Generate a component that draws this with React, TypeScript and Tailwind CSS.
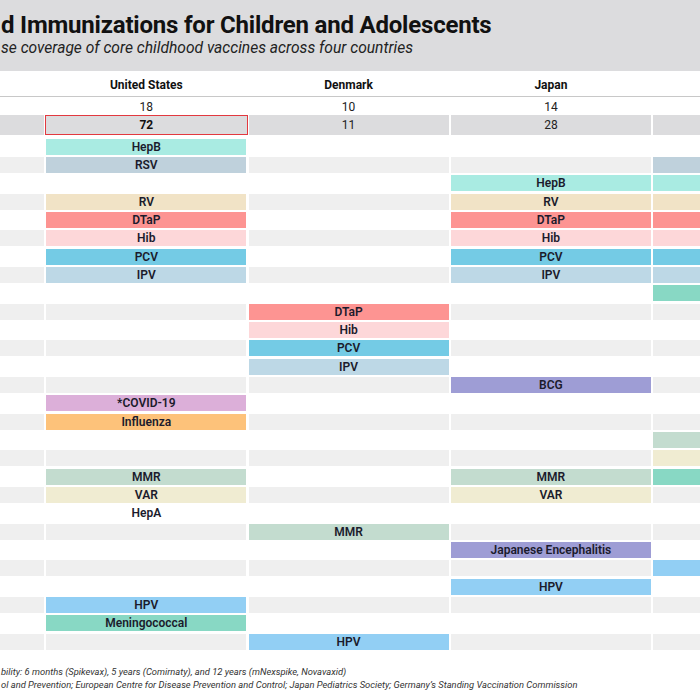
const COLORS: Record<string, string> = {
  HepB: 'bg-[#a9ebe2]',
  RSV: 'bg-[#bfd1dc]',
  RV: 'bg-[#f1e3c6]',
  DTaP: 'bg-[#fd9492]',
  Hib: 'bg-[#fdd7d9]',
  PCV: 'bg-[#74cbe5]',
  IPV: 'bg-[#bdd8e6]',
  BCG: 'bg-[#9e9dd5]',
  'Japanese Encephalitis': 'bg-[#9e9dd5]',
  '*COVID-19': 'bg-[#dcafd9]',
  Influenza: 'bg-[#fdc27a]',
  MMR: 'bg-[#c3dccf]',
  VAR: 'bg-[#f0ecd2]',
  HepA: 'bg-transparent',
  HPV: 'bg-[#92cff4]',
  Meningococcal: 'bg-[#88d8c4]',
  MenC: 'bg-[#88d8c4]',
};

// [United States, Denmark, Japan, Germany]
const ROWS: (string | null)[][] = [
  ['HepB', null, null, null],
  ['RSV', null, null, 'RSV'],
  [null, null, 'HepB', 'HepB'],
  ['RV', null, 'RV', 'RV'],
  ['DTaP', null, 'DTaP', 'DTaP'],
  ['Hib', null, 'Hib', 'Hib'],
  ['PCV', null, 'PCV', 'PCV'],
  ['IPV', null, 'IPV', 'IPV'],
  [null, null, null, 'MenC'],
  [null, 'DTaP', null, null],
  [null, 'Hib', null, null],
  [null, 'PCV', null, null],
  [null, 'IPV', null, null],
  [null, null, 'BCG', null],
  ['*COVID-19', null, null, null],
  ['Influenza', null, null, null],
  [null, null, null, 'MMR'],
  [null, null, null, 'VAR'],
  ['MMR', null, 'MMR', 'Meningococcal'],
  ['VAR', null, 'VAR', null],
  ['HepA', null, null, null],
  [null, 'MMR', null, null],
  [null, null, 'Japanese Encephalitis', null],
  [null, null, null, 'HPV'],
  [null, null, 'HPV', null],
  ['HPV', null, null, null],
  ['Meningococcal', null, null, null],
  [null, 'HPV', null, null],
];

const COUNTRIES = [
  { name: 'United States', vaccines: '18', doses: '72' },
  { name: 'Denmark', vaccines: '10', doses: '11' },
  { name: 'Japan', vaccines: '14', doses: '28' },
  { name: 'Germany', vaccines: '15', doses: '33' },
];

const grid = 'grid grid-cols-[44px_200px_200px_200px_200px] gap-x-[2.3px] w-[900px]';

function Cell({ name, stripe }: { name: string | null; stripe: boolean }) {
  const bg = name ? COLORS[name] : stripe ? 'bg-[#efefef]' : 'bg-white';
  return (
    <div className={`h-[16px] flex items-center justify-center text-[12px] font-semibold text-[#1b1b2c] ${bg}`}>
      {name}
    </div>
  );
}

export default function App() {
  return (
    <div className="w-full h-screen overflow-hidden bg-white font-['Roboto',sans-serif]">
      {/* Title band */}
      <div className="h-[71px] bg-[#dcdcde] pl-[1px] pt-[12px] whitespace-nowrap">
        <h1 className="text-[24px] leading-[26px] font-bold text-[#111] tracking-[-0.2px]">
          d Immunizations for Children and Adolescents
        </h1>
        <p className="text-[15.6px] leading-[20px] italic text-[#222]">
          se coverage of core childhood vaccines across four countries
        </p>
      </div>

      {/* Country header */}
      <div className={`${grid} h-[26px] pt-[3px] border-b border-[#c8c8c8] items-center`}>
        <div />
        {COUNTRIES.map((c) => (
          <div key={c.name} className="text-center text-[12px] font-bold text-[#111]">
            {c.name}
          </div>
        ))}
      </div>

      {/* Counts */}
      <div className={`${grid} h-[18px] pt-[1px] items-center`}>
        <div />
        {COUNTRIES.map((c) => (
          <div key={c.name} className="text-center text-[12px] text-[#222]">
            {c.vaccines}
          </div>
        ))}
      </div>
      <div className={`${grid} h-[17px]`}>
        <div className="bg-[#dcdcde]" />
        {COUNTRIES.map((c, i) => (
          <div
            key={c.name}
            className={
              i === 0
                ? 'bg-[#dcdcde] -mx-[1.5px] border-[1.5px] border-[#e2393f] flex items-center justify-center text-[12px] font-bold text-[#111]'
                : 'bg-[#dcdcde] flex items-center justify-center text-[12px] text-[#222]'
            }
          >
            {c.doses}
          </div>
        ))}
      </div>

      {/* Schedule */}
      <div className="mt-[6.5px] flex flex-col gap-y-[2.35px]">
        {ROWS.map((row, r) => (
          <div key={r} className={grid}>
            <div className={r % 2 === 1 ? 'h-[16px] bg-[#efefef]' : 'h-[16px] bg-white'} />
            {row.map((v, c) => (
              <Cell key={c} name={v} stripe={r % 2 === 1} />
            ))}
          </div>
        ))}
      </div>

      {/* Notes */}
      <div className="mt-[15px] pl-[1px] text-[9.4px] leading-[13.5px] italic text-[#333] whitespace-nowrap font-['Liberation_Sans_Narrow','Roboto',sans-serif]">
        <p>bility: 6 months (Spikevax), 5 years (Comirnaty), and 12 years (mNexspike, Novavaxid)</p>
        <p>ol and Prevention; European Centre for Disease Prevention and Control; Japan Pediatrics Society; Germany’s Standing Vaccination Commission</p>
      </div>
    </div>
  );
}
